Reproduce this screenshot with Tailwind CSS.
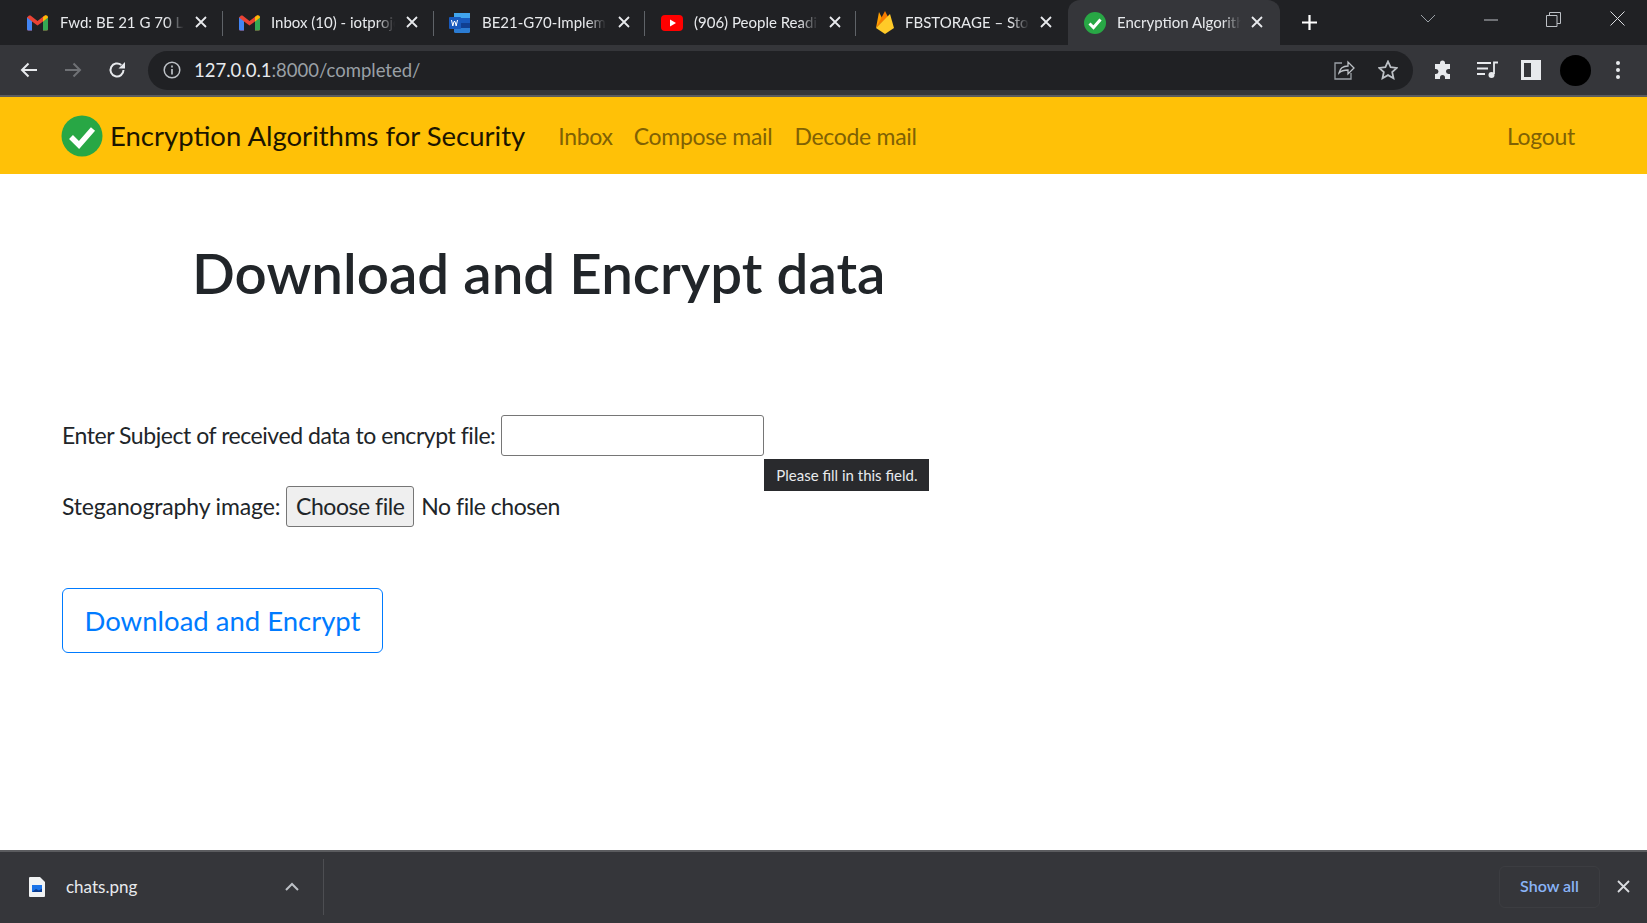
<!DOCTYPE html>
<html lang="en">
<head>
  <meta charset="UTF-8" />
  <title>Encryption Algorithms for Security</title>
  <script src="https://cdn.jsdelivr.net/npm/@tailwindcss/browser@4"></script>
</head>
<body class="h-[923px] w-[1647px] overflow-hidden flex flex-col bg-white font-['Lato',sans-serif] text-[#212529]">

  <!-- Tab strip -->
  <div class="h-[45px] bg-[#202124] flex items-start pl-[11px] text-[15px] text-[#e8eaed] shrink-0">
    <div class="w-[212px] h-[45px] flex items-center relative">
      <svg class="ml-[16px] w-[21px] h-[17px]" viewBox="0 0 21 16"><path d="M0 3v11.5A1.5 1.5 0 0 0 1.5 16H5V7l5.5 4L16 7v9h3.500a1.500 1.500 0 0 0 1.500-1.500V3l-2-2h-1.500L10.500 6.500 3.500 1H2z" fill="#ea4335"/><path d="M0 3v11.500A1.500 1.500 0 0 0 1.500 16H5V7z" fill="#4285f4"/><path d="M16 7v9h3.500a1.500 1.500 0 0 0 1.500-1.500V3z" fill="#34a853"/><path d="M16 2.500V7l5-4c0-2-2-2.800-3.200-1.800z" fill="#fbbc04"/></svg>
      <span class="ml-[12px] w-[124px] pb-[1px] whitespace-nowrap overflow-hidden [mask-image:linear-gradient(to_right,black_85%,transparent)]">Fwd: BE 21 G 70 Lab</span>
      <svg class="absolute left-[183px] top-[15px] w-[14px] h-[14px]" viewBox="0 0 14 14"><path d="M2 2l10 10M12 2L2 12" stroke="#e8eaed" stroke-width="1.800"/></svg>
      <div class="absolute right-0 top-[11px] w-px h-[25px] bg-[#5f6368]"></div>
    </div>
    <div class="w-[211px] h-[45px] flex items-center relative">
      <svg class="ml-[16px] w-[21px] h-[17px]" viewBox="0 0 21 16"><path d="M0 3v11.5A1.5 1.5 0 0 0 1.5 16H5V7l5.5 4L16 7v9h3.500a1.500 1.500 0 0 0 1.500-1.500V3l-2-2h-1.500L10.500 6.500 3.500 1H2z" fill="#ea4335"/><path d="M0 3v11.500A1.500 1.500 0 0 0 1.500 16H5V7z" fill="#4285f4"/><path d="M16 7v9h3.500a1.500 1.500 0 0 0 1.500-1.500V3z" fill="#34a853"/><path d="M16 2.500V7l5-4c0-2-2-2.800-3.200-1.800z" fill="#fbbc04"/></svg>
      <span class="ml-[11px] w-[124px] pb-[1px] whitespace-nowrap overflow-hidden [mask-image:linear-gradient(to_right,black_85%,transparent)]">Inbox (10) - iotproject</span>
      <svg class="absolute left-[182px] top-[15px] w-[14px] h-[14px]" viewBox="0 0 14 14"><path d="M2 2l10 10M12 2L2 12" stroke="#e8eaed" stroke-width="1.800"/></svg>
      <div class="absolute right-0 top-[11px] w-px h-[25px] bg-[#5f6368]"></div>
    </div>
    <div class="w-[211px] h-[45px] flex items-center relative">
      <svg class="ml-[15px] w-[21px] h-[20px]" viewBox="0 0 21 20"><rect x="5" y="0" width="16" height="20" rx="1.500" fill="#2b7cd3"/><rect x="5" y="5" width="16" height="5" fill="#185abd"/><rect x="5" y="10" width="16" height="5" fill="#103f91"/><rect x="5" y="0" width="16" height="5" fill="#41a5ee"/><rect x="0" y="4" width="12" height="12" rx="1" fill="#185abd"/><path d="M2.500 7l1.300 6 1.200-4.500h1l1.200 4.500 1.300-6" fill="none" stroke="#fff" stroke-width="1"/></svg>
      <span class="ml-[12px] w-[124px] pb-[1px] whitespace-nowrap overflow-hidden [mask-image:linear-gradient(to_right,black_85%,transparent)]">BE21-G70-Implementation</span>
      <svg class="absolute left-[183px] top-[15px] w-[14px] h-[14px]" viewBox="0 0 14 14"><path d="M2 2l10 10M12 2L2 12" stroke="#e8eaed" stroke-width="1.800"/></svg>
      <div class="absolute right-0 top-[11px] w-px h-[25px] bg-[#5f6368]"></div>
    </div>
    <div class="w-[211px] h-[45px] flex items-center relative">
      <svg class="ml-[16px] w-[22px] h-[16px]" viewBox="0 0 22 16"><rect width="22" height="16" rx="4" fill="#ff0000"/><path d="M9 4.500v7l6-3.500z" fill="#fff"/></svg>
      <span class="ml-[11px] w-[124px] pb-[1px] whitespace-nowrap overflow-hidden [mask-image:linear-gradient(to_right,black_85%,transparent)]">(906) People Reading</span>
      <svg class="absolute left-[183px] top-[15px] w-[14px] h-[14px]" viewBox="0 0 14 14"><path d="M2 2l10 10M12 2L2 12" stroke="#e8eaed" stroke-width="1.800"/></svg>
      <div class="absolute right-0 top-[11px] w-px h-[25px] bg-[#5f6368]"></div>
    </div>
    <div class="w-[211px] h-[45px] flex items-center relative">
      <svg class="ml-[20px] w-[18px] h-[23px]" viewBox="0 0 18 23"><path d="M0 17L3 1l4 8z" fill="#ffa000"/><path d="M0 17L9 0l3 6z" fill="#f57c00"/><path d="M0 17L14 3l4 14-9 6z" fill="#ffca28"/></svg>
      <span class="ml-[11px] w-[124px] pb-[1px] whitespace-nowrap overflow-hidden [mask-image:linear-gradient(to_right,black_85%,transparent)]">FBSTORAGE – Storage</span>
      <svg class="absolute left-[183px] top-[15px] w-[14px] h-[14px]" viewBox="0 0 14 14"><path d="M2 2l10 10M12 2L2 12" stroke="#e8eaed" stroke-width="1.800"/></svg>
    </div>
    <!-- active tab -->
    <div class="w-[212px] h-[45px] ml-[1px] flex items-center relative bg-[#35363a] rounded-t-[12px]">
      <svg class="ml-[16px] w-[22px] h-[22px]" viewBox="0 0 22 22"><circle cx="11" cy="11" r="11" fill="#28a745"/><path d="M5.500 11.500l4 4 7-8" fill="none" stroke="#fff" stroke-width="3"/></svg>
      <span class="ml-[11px] w-[124px] pb-[1px] whitespace-nowrap overflow-hidden [mask-image:linear-gradient(to_right,black_85%,transparent)]">Encryption Algorithms</span>
      <svg class="absolute left-[182px] top-[15px] w-[14px] h-[14px]" viewBox="0 0 14 14"><path d="M2 2l10 10M12 2L2 12" stroke="#e8eaed" stroke-width="1.800"/></svg>
    </div>
    <svg class="ml-[21px] mt-[14px] w-[17px] h-[17px]" viewBox="0 0 17 17"><path d="M8.500 1v15M1 8.500h15" stroke="#fff" stroke-width="2.200"/></svg>
    <div class="ml-auto flex items-start">
      <svg class="mt-[14px] w-[16px] h-[10px]" viewBox="0 0 16 10"><path d="M1 1l7 7 7-7" fill="none" stroke="#9aa0a6" stroke-width="1"/></svg>
      <svg class="ml-[48px] mt-[19px] w-[14px] h-[2px]" viewBox="0 0 14 2"><path d="M0 1h14" stroke="#bdc1c6" stroke-width="1"/></svg>
      <svg class="ml-[48px] mt-[12px] w-[15px] h-[15px]" viewBox="0 0 15 15"><path d="M.5 3.500h10.500v11H.5zM3.500 3.500v-3h11v11h-3.500" fill="none" stroke="#bdc1c6" stroke-width="1"/></svg>
      <svg class="ml-[49px] mr-[22px] mt-[11px] w-[15px] h-[15px]" viewBox="0 0 15 15"><path d="M.5.500l14 14M14.500.500l-14 14" stroke="#dadce0" stroke-width="1"/></svg>
    </div>
  </div>

  <!-- Toolbar -->
  <div class="h-[52px] bg-[#35363a] border-b-2 border-[#5b5c5f] flex items-center shrink-0">
    <svg class="ml-[20px] w-[18px] h-[16px]" viewBox="0 0 18 16"><path d="M17 8H2M8.500 1.500L2 8l6.500 6.500" fill="none" stroke="#e8eaed" stroke-width="2"/></svg>
    <svg class="ml-[26px] w-[18px] h-[16px]" viewBox="0 0 18 16"><path d="M1 8h15M9.500 1.500L16 8l-6.500 6.500" fill="none" stroke="#6f7175" stroke-width="2"/></svg>
    <svg class="ml-[26px] w-[18px] h-[18px]" viewBox="0 0 18 18"><path d="M15.500 9A6.500 6.500 0 1 1 13.300 4.100" fill="none" stroke="#e8eaed" stroke-width="2"/><path d="M17 1v6.500h-6.500z" fill="#e8eaed"/></svg>
    <div class="ml-[22px] w-[1265px] h-[39px] rounded-full bg-[#202124] flex items-center">
      <svg class="ml-[15px] w-[18px] h-[18px]" viewBox="0 0 18 18"><circle cx="9" cy="9" r="7.800" fill="none" stroke="#bdc1c6" stroke-width="1.500"/><path d="M9 8v5.500M9 4.500v2" stroke="#bdc1c6" stroke-width="1.700"/></svg>
      <span class="ml-[13px] mt-[1px] text-[18.500px] text-[#e8eaed]">127.0.0.1<span class="text-[#9aa0a6]">:8000/completed/</span></span>
      <svg class="ml-auto w-[21px] h-[20px]" viewBox="0 0 21 20"><path d="M8 3H1v16h16v-6" fill="none" stroke="#9aa0a6" stroke-width="1.300"/><path d="M5 13c1-5 5-7 9-7V2l6 6-6 6v-4c-4 0-7 1-9 3z" fill="none" stroke="#bdc1c6" stroke-width="1.300"/></svg>
      <svg class="ml-[23px] mr-[15px] w-[20px] h-[20px]" viewBox="0 0 20 20"><path d="M10 1.500l2.600 5.700 6.200.7-4.600 4.200 1.300 6.100L10 15.100l-5.500 3.100 1.300-6.100L1.200 7.900l6.200-.7z" fill="none" stroke="#bdc1c6" stroke-width="1.800"/></svg>
    </div>
    <svg class="ml-[20px] w-[20px] h-[20px]" viewBox="0 0 20 20"><path d="M7 3a2.500 2.500 0 0 1 5 0v1h5v5h-1.500a2.500 2.500 0 0 0 0 5H17v5h-5v-1.500a2.500 2.500 0 0 0-5 0V19H2v-5h1a2.500 2.500 0 0 0 0-5H2V4h5z" fill="#e8eaed"/></svg>
    <svg class="ml-[24px] w-[21px] h-[18px]" viewBox="0 0 21 18"><path d="M0 2h14M0 7.500h11M0 13h8" stroke="#e8eaed" stroke-width="1.800"/><path d="M17 13V1.500h4" fill="none" stroke="#e8eaed" stroke-width="1.800"/><circle cx="14.500" cy="14" r="3" fill="#e8eaed"/></svg>
    <svg class="ml-[23px] w-[20px] h-[20px]" viewBox="0 0 20 20"><rect width="20" height="20" fill="#e8eaed"/><rect x="3" y="3" width="7" height="14" fill="#35363a"/></svg>
    <div class="ml-[19px] w-[31px] h-[31px] rounded-full bg-black"></div>
    <svg class="ml-[24px] w-[6px] h-[20px]" viewBox="0 0 6 20"><circle cx="3" cy="3" r="2" fill="#e8eaed"/><circle cx="3" cy="10" r="2" fill="#e8eaed"/><circle cx="3" cy="17" r="2" fill="#e8eaed"/></svg>
  </div>

  <!-- Navbar -->
  <nav class="h-[77px] bg-[#ffc107] flex items-center pl-[61px] pr-[72px] shrink-0 text-[23px] tracking-[-0.3px]">
    <svg class="w-[42px] h-[42px]" viewBox="0 0 42 42"><circle cx="21" cy="21" r="20.500" fill="#28a745"/><path d="M10 22l8 8 14-16" fill="none" stroke="#fff" stroke-width="5.500"/></svg>
    <span class="ml-[7px] mt-[1px] text-[27.500px] tracking-normal text-[#1c1500]">Encryption Algorithms for Security</span>
    <a class="ml-[33px] mt-[2px] text-[#806104]">Inbox</a>
    <a class="ml-[21px] mt-[2px] text-[#806104]">Compose mail</a>
    <a class="ml-[22px] mt-[2px] text-[#806104]">Decode mail</a>
    <a class="ml-auto mt-[2px] text-[#806104]">Logout</a>
  </nav>

  <!-- Main content -->
  <main class="flex-1 pl-[62px] text-[23px]">
    <h1 class="ml-[130px] mt-[65px] text-[56.500px] leading-[67px] font-semibold">Download and Encrypt data</h1>

    <form class="mt-[109px]">
      <div class="flex items-center h-[41px]">
        <label class="tracking-[-0.45px]">Enter Subject of received data to encrypt file:</label>
        <div class="relative ml-[6px]">
          <input type="text" class="block w-[263px] h-[41px] border border-[#767676] rounded-[3px] bg-white" />
          <div class="absolute left-[263px] top-[44px] w-[165px] h-[32px] bg-[#292a2d] text-[#e8eaed] text-[15px] flex items-center justify-center whitespace-nowrap">Please fill in this field.</div>
        </div>
      </div>
      <div class="flex items-center mt-[30px] h-[41px]">
        <label class="tracking-[-0.15px]">Steganography image:</label>
        <button type="button" class="ml-[6px] w-[128px] h-[41px] border border-[#767676] rounded-[3px] bg-[#efefef] tracking-[-0.45px]">Choose file</button>
        <span class="ml-[7px] tracking-[-0.45px]">No file chosen</span>
      </div>
      <button type="button" class="block mt-[61px] w-[321px] h-[65px] border border-[#007bff] rounded-[6px] text-[#007bff] text-[27.500px]">Download and Encrypt</button>
    </form>
  </main>

  <!-- Download shelf -->
  <div class="h-[73px] bg-[#35363a] border-t-2 border-[#5b5c5f] flex items-center shrink-0 pb-[2px] text-[#e8eaed]">
    <svg class="ml-[29px] w-[16px] h-[20px]" viewBox="0 0 16 20"><path d="M0 1a1 1 0 0 1 1-1h10l5 5v14a1 1 0 0 1-1 1H1a1 1 0 0 1-1-1z" fill="#f1f3f4"/><rect x="3" y="8" width="10" height="7" fill="#1a73e8"/><path d="M3 15l4-3 3 1.500 3-2V15z" fill="#0b3d91"/></svg>
    <span class="ml-[21px] text-[17px]">chats.png</span>
    <svg class="ml-[148px] w-[14px] h-[9px]" viewBox="0 0 14 9"><path d="M1 8l6-6 6 6" fill="none" stroke="#bdc1c6" stroke-width="2"/></svg>
    <div class="ml-[24px] w-px h-[56px] bg-[#4d4e52]"></div>
    <div class="ml-auto w-[101px] h-[42px] pb-[2px] border border-[#3c3d41] rounded-[6px] flex items-center justify-center text-[#8ab4f8] text-[16px] font-semibold">Show all</div>
    <svg class="ml-[17px] mr-[17px] w-[13px] h-[13px]" viewBox="0 0 13 13"><path d="M1 1l11 11M12 1L1 12" stroke="#dadce0" stroke-width="1.800"/></svg>
  </div>
</body>
</html>
